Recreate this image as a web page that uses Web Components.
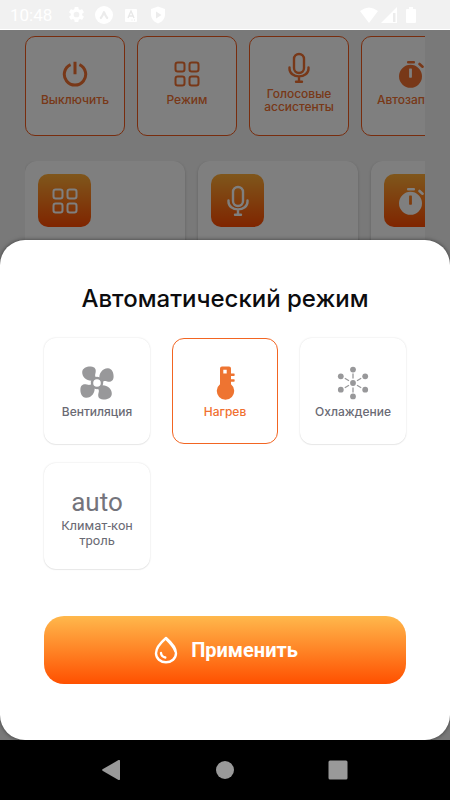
<!DOCTYPE html>
<html lang="ru">
<head>
<meta charset="utf-8">
<meta name="viewport" content="width=device-width, initial-scale=1">
<title>Автоматический режим</title>
<style>
html, body { margin: 0; height: 100%; }
body { font-family: Inter, "Noto Sans", sans-serif; background: #000; }
</style>
</head>
<body>
<climate-app></climate-app>
<script>
const BLADE = 'M13 14.500C7.500 15.500 2 11.500 2.200 6 2.400 1.900 7 .2 10.800.4c4.600.2 5.600 3.300 4.700 6.500-.6 2.300-.6 3.200.8 4.700z';
const blades = [0, 90, 180, 270].map(a => `<path d="${BLADE}" transform="rotate(${a} 17 17)"/>`).join('');
const ICONS = {
  power: '<svg viewBox="0 0 26 26" width="26" height="26" fill="none" stroke="currentColor" stroke-width="3"><path d="M8.600 3.600a10.700 10.700 0 1 0 8.800 0M13 .7v12.600"/></svg>',
  grid: '<svg viewBox="0 0 26 26" width="26" height="26" fill="none" stroke="currentColor" stroke-width="2"><rect x="1.5" y="1.5" width="9" height="9" rx="2.2"/><rect x="15.5" y="1.5" width="9" height="9" rx="2.2"/><rect x="1.5" y="15.5" width="9" height="9" rx="2.2"/><rect x="15.5" y="15.5" width="9" height="9" rx="2.2"/></svg>',
  mic: '<svg viewBox="0 0 24 32" width="24" height="32" fill="none" stroke="currentColor" stroke-width="2.4" stroke-linecap="round"><rect x="7" y="2" width="10" height="19" rx="5"/><path d="M2.500 15.500v1.200c0 4.600 4.300 7.700 9.500 7.700s9.500-3.100 9.500-7.700v-1.200M12 24.800v5M9 29.800h6"/></svg>',
  timer: '<svg viewBox="0 0 26 28" width="26" height="28" fill="currentColor"><path fill-rule="evenodd" d="M12.500 4.800a11.500 11.500 0 1 0 0 23 11.500 11.500 0 0 0 0-23zm-.8 3.700h1.600q.6 0 .6.600v8q0 .6-.6.600h-1.600q-.6 0-.6-.6v-8q0-.6.600-.6z"/><rect x="9" y="1" width="8" height="2.600" rx="1"/><path d="M21.500 4l3 2.700" stroke="currentColor" stroke-width="2.600" stroke-linecap="round"/></svg>',
  fan: `<svg viewBox="0 0 34 34" width="34" height="34" fill="currentColor">${blades}<circle cx="17" cy="17" r="5" fill="#fff" stroke="currentColor" stroke-width="2.400"/></svg>`,
  heat: '<svg viewBox="0 0 34 34" width="34" height="34" fill="currentColor"><path fill-rule="evenodd" d="M14 .5h7Q23 .5 23 2.500V7.500h3q.7 0 .7 1.300T26 10.100h-3v3.200h3q.7 0 .7 1.200T26 15.800h-3V18.300a8.700 8.700 0 1 1-11 0V2.500Q12 .5 14 .5zM15.300 3.800v3.600h3.400V3.800z"/></svg>',
  cool: '<svg viewBox="0 0 34 34" width="34" height="34" fill="currentColor"><g stroke="currentColor" stroke-width="1.300"><path d="M17 7.500v5M17 21.500v5M8.800 12.300l4.200 2.400M21 19.300l4.200 2.400M8.800 21.700l4.200-2.400M21 14.700l4.200-2.400"/></g><circle cx="17" cy="17" r="2.900"/><circle cx="17" cy="3.600" r="2.900"/><circle cx="17" cy="30.400" r="2.900"/><circle cx="4.800" cy="10.300" r="2.900"/><circle cx="29.200" cy="10.300" r="2.900"/><circle cx="4.800" cy="23.700" r="2.900"/><circle cx="29.200" cy="23.700" r="2.900"/></svg>',
  drop: '<svg viewBox="0 0 24 28" width="24" height="28" fill="none" stroke="currentColor" stroke-linecap="round" stroke-linejoin="round"><path stroke-width="2.400" d="M12 2C8.500 5 2 11.500 2 17.300 2 22.500 6.500 26.300 12 26.300s10-3.800 10-9C22 11.500 15.500 5 12 2z"/><path stroke-width="2" d="M12 3C15.500 6.500 20 11.500 21 15"/><path stroke-width="2.400" d="M7 17c.2 2.400 1.800 4 4.300 4.500"/></svg>'
};
const define = (name, html, setup) => customElements.define(name, class extends HTMLElement {
  constructor() {
    super();
    this.attachShadow({ mode: 'open' });
  }
  connectedCallback() {
    const t = document.createElement('template');
    t.innerHTML = html;
    const content = t.content.cloneNode(true);
    if (setup) setup(this, content);
    this.shadowRoot.replaceChildren(content);
  }
});

define('app-icon', '<style>:host{display:flex;align-items:center;justify-content:center}svg{display:block}</style><span></span>',
  (host, root) => { root.querySelector('span').innerHTML = ICONS[host.getAttribute('name')]; });

define('status-bar', `
<style>
:host { display: flex; box-sizing: border-box; height: 30px; padding: 0 34px 0 10px; align-items: center; background: #f1f1f1; border-bottom: 1px solid #fff; color: #fff; font: 17px Roboto, sans-serif; }
time { flex: none; width: 57px; }
.group { display: flex; align-items: center; gap: 9px; }
.right { margin-left: auto; gap: 3px; }
.right svg:last-child { margin-left: 6px; }
svg { display: block; flex: none; }
</style>
<time>10:48</time>
<div class="group">
<svg width="19" height="19" viewBox="0 0 24 24" fill="#fff"><path d="M19.140 12.940c.04-.3.060-.61.060-.94s-.02-.64-.07-.94l2.030-1.580a.5.5 0 0 0 .12-.61l-1.920-3.320a.5.5 0 0 0-.59-.22l-2.390.96a7 7 0 0 0-1.620-.94l-.36-2.540A.5.500 0 0 0 13.900 2.400h-3.800a.5.5 0 0 0-.5.410l-.36 2.540a7 7 0 0 0-1.620.94l-2.390-.96a.5.5 0 0 0-.59.220L2.740 8.870a.5.5 0 0 0 .12.610l2.030 1.580a6 6 0 0 0 0 1.880l-2.030 1.580a.5.5 0 0 0-.12.610l1.900 3.320c.12.220.37.290.59.220l2.390-.96q.75.570 1.620.94l.36 2.540c.05.240.24.410.5.410h3.800c.24 0 .44-.17.470-.41l.36-2.540a7 7 0 0 0 1.620-.94l2.390.96c.22.080.47 0 .59-.22l1.920-3.320a.5.5 0 0 0-.12-.61zM12 15.600a3.600 3.600 0 1 1 0-7.200 3.600 3.600 0 0 1 0 7.200z"/></svg>
<svg width="18" height="18" viewBox="0 0 18 18"><circle cx="9" cy="9" r="9" fill="#fff"/><path d="M5.800 12Q7.800 9.500 9 6.200 10.200 9.500 12.200 12" fill="none" stroke="#ececec" stroke-width="2.200" stroke-linecap="round" stroke-linejoin="round"/></svg>
<svg width="18" height="18" viewBox="0 0 18 18"><rect x="3" y="3" width="12" height="13" rx="1" fill="#fff"/><path d="M6 12l3-7 3 7M7 10h4" fill="none" stroke="#e8e8e8" stroke-width="1.400"/><path d="M9.500 14h1M12 14h1" stroke="#e8e8e8"/></svg>
<svg width="18" height="18" viewBox="0 0 18 18"><path d="M9 .5l7 2.500v5c0 5-3 8-7 9.500C5 16 2 13 2 8V3z" fill="#fff"/><path d="M7 5.500v7l5.500-3.500z" fill="#ececec"/></svg>
</div>
<div class="group right">
<svg width="18" height="16" viewBox="0 0 18 16" fill="#fff"><path d="M0 4Q9-3 18 4L9 16z"/></svg>
<svg width="16" height="16" viewBox="0 0 16 16"><path d="M16 0v16H0z" fill="#fff"/><path d="M12 6h2.500v9H12z" fill="#ececec"/></svg>
<svg width="10" height="16" viewBox="0 0 10 16"><path d="M3 0h4v2h2q1 0 1 1v12q0 1-1 1H1q-1 0-1-1V3q0-1 1-1h2z" fill="#fff"/></svg>
</div>`);

define('action-tile', `
<style>
:host { display: block; flex: none; width: 100px; height: 100px; }
button { box-sizing: border-box; width: 100%; height: 100%; padding: 0 4px 8px; margin: 0; border: 1px solid #f05a1c; border-radius: 10px; background: #fff; color: #f07030; font: 500 12px/13px Inter, sans-serif; display: flex; flex-direction: column; align-items: center; justify-content: center; gap: 3px; white-space: nowrap; }
app-icon { height: 32px; }
</style>
<button type="button"><app-icon></app-icon><span><slot></slot></span></button>`,
  (host, root) => root.querySelector('app-icon').setAttribute('name', host.getAttribute('icon')));

define('feature-card', `
<style>
:host { display: block; box-sizing: border-box; flex: none; width: 160px; height: 160px; padding: 13px; border-radius: 12px; background: #fff; box-shadow: 0 1px 3px rgba(0,0,0,.2); }
.badge { display: flex; align-items: center; justify-content: center; width: 53px; height: 53px; border-radius: 10px; color: #fff; background: linear-gradient(#ffae38, #ff4a00); }
</style>
<div class="badge"><slot></slot></div>`);

define('mode-tile', `
<style>
:host { display: block; }
button { box-sizing: border-box; width: 100%; height: 106px; margin: 0; padding: 2px 4px 0; border: 1px solid transparent; border-radius: 12px; background: #fff; color: #6a6a74; box-shadow: 0 0 2px rgba(0,0,0,.14), 0 1px 1px rgba(0,0,0,.06); font: 500 12px/15px Inter, sans-serif; display: flex; flex-direction: column; align-items: center; justify-content: center; }
.icon { display: block; margin-bottom: 4px; color: #98989a; }
:host([selected]) button { border-color: #f26522; color: #f07030; box-shadow: none; }
:host([selected]) .icon { color: #ee7431; }
:host([text]) .icon { margin: 0; color: #74747c; font: 26px/32px Roboto, sans-serif; }
:host([text]) button { font: 13px/15px Roboto, sans-serif; }
</style>
<button type="button"><span class="icon"><slot name="icon"></slot></span><span><slot></slot></span></button>`,
  (host, root) => root.querySelector('button').setAttribute('aria-pressed', host.hasAttribute('selected')));

define('apply-button', `
<style>
:host { display: block; }
button { width: 100%; height: 68px; margin: 0; padding: 0 0 0 2px; border: 0; border-radius: 20px; color: #fff; background: linear-gradient(#ffb84c, #ff5000); display: flex; align-items: center; justify-content: center; gap: 13px; font: 700 20px/24px Roboto, sans-serif; }
</style>
<button type="button"><app-icon name="drop"></app-icon><span><slot></slot></span></button>`);

define('mode-sheet', `
<style>
:host { display: block; box-sizing: border-box; padding: 44px 44px 56px; border-radius: 25px; background: #fff; box-shadow: 0 0 4px rgba(0,0,0,.5); }
h1 { margin: 0 0 24px; font: 500 24px/30px Inter, sans-serif; text-align: center; color: #0c0c0e; white-space: nowrap; }
.modes { display: grid; grid-template-columns: repeat(3, 1fr); gap: 19px 22px; margin-bottom: 47px; }
</style>
<h1>Автоматический режим</h1>
<div class="modes">
<mode-tile><app-icon slot="icon" name="fan"></app-icon>Вентиляция</mode-tile>
<mode-tile selected><app-icon slot="icon" name="heat"></app-icon>Нагрев</mode-tile>
<mode-tile><app-icon slot="icon" name="cool"></app-icon>Охлаждение</mode-tile>
<mode-tile text><span slot="icon">auto</span>Климат-кон<br>троль</mode-tile>
</div>
<apply-button>Применить</apply-button>`);

define('nav-bar', `
<style>
:host { display: grid; grid-template-columns: repeat(3, 1fr); height: 60px; padding: 0 56px; background: #000; }
button { border: 0; margin: 0; padding: 0; background: none; display: flex; align-items: center; justify-content: center; }
svg { display: block; fill: #999; }
</style>
<button type="button" aria-label="Назад"><svg width="20" height="20" viewBox="0 0 20 20"><path d="M.5 9.300Q-.2 10 .5 10.700L16.500 19.900q1.500.5 1.500-.9V1Q18-.4 16.500.1z"/></svg></button>
<button type="button" aria-label="Домой"><svg width="20" height="20" viewBox="0 0 20 20"><circle cx="10" cy="10" r="9"/></svg></button>
<button type="button" aria-label="Обзор"><svg width="20" height="20" viewBox="0 0 20 20"><rect x=".5" y=".5" width="19" height="19" rx="1.500"/></svg></button>`);

define('climate-app', `
<style>
:host { display: flex; flex-direction: column; min-height: 100vh; }
main { position: relative; flex: 1; display: flex; flex-direction: column; justify-content: flex-end; background: #f2f2f2; }
.page { position: absolute; inset: 0; overflow: hidden; padding: 6px 25px; }
.row { display: flex; gap: 12px; overflow: hidden; padding-bottom: 25px; }
.cards { gap: 13px; }
.scrim { position: absolute; inset: 0; background: rgba(0,0,0,.5); }
mode-sheet { position: relative; }
nav-bar { position: relative; }
</style>
<status-bar></status-bar>
<main>
<div class="page">
<div class="row">
<action-tile icon="power">Выключить</action-tile>
<action-tile icon="grid">Режим</action-tile>
<action-tile icon="mic">Голосовые<br>ассистенты</action-tile>
<action-tile icon="timer">Автозапуск</action-tile>
</div>
<div class="row cards">
<feature-card><app-icon name="grid"></app-icon></feature-card>
<feature-card><app-icon name="mic"></app-icon></feature-card>
<feature-card><app-icon name="timer"></app-icon></feature-card>
</div>
</div>
<div class="scrim"></div>
<mode-sheet role="dialog" aria-label="Автоматический режим"></mode-sheet>
</main>
<nav-bar></nav-bar>`);
</script>
</body>
</html>
